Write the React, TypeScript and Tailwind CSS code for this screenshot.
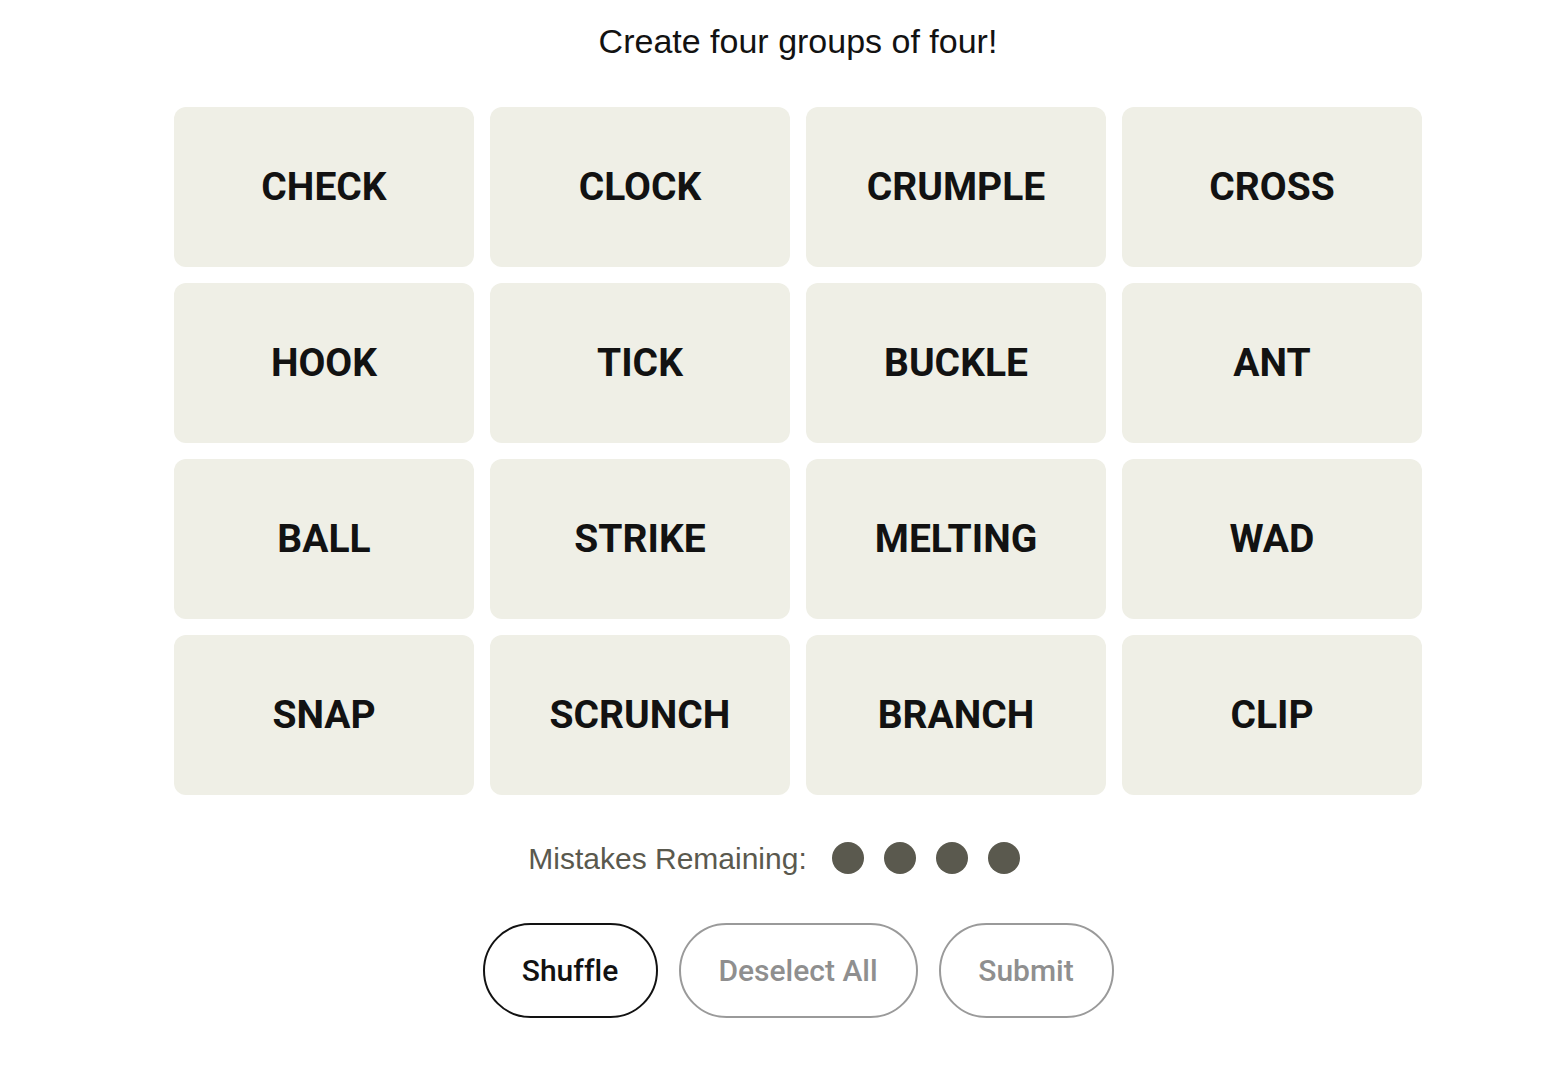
import React from "react";

const words = [
    "CHECK", "CLOCK", "CRUMPLE", "CROSS",
    "HOOK", "TICK", "BUCKLE", "ANT",
    "BALL", "STRIKE", "MELTING", "WAD",
    "SNAP", "SCRUNCH", "BRANCH", "CLIP",
];

const App: React.FC = () => {
    return (
        <div className="min-h-screen bg-white flex flex-col items-center pl-[28px] pt-[21px] text-[#121212]">
            <h1 className="text-[34px] leading-[40px] font-normal font-['Liberation_Sans',Arial,sans-serif]">
                Create four groups of four!
            </h1>

            <div className="mt-[46px] grid grid-cols-[repeat(4,300px)] auto-rows-[160px] gap-4">
                {words.map((w) => (
                    <button
                        key={w}
                        className="bg-[#efefe6] rounded-[12px] flex items-center justify-center font-['Roboto',sans-serif] font-bold text-[39px] text-[#121212]"
                    >
                        {w}
                    </button>
                ))}
            </div>

            <div className="mt-[45px] mr-[48px] flex items-center h-[36px] font-['Liberation_Sans',Arial,sans-serif] text-[30px] text-[#5a594e]">
                <span>Mistakes Remaining:</span>
                <div className="ml-[25px] flex gap-5">
                    <span className="w-8 h-8 rounded-full bg-[#5a594e]" />
                    <span className="w-8 h-8 rounded-full bg-[#5a594e]" />
                    <span className="w-8 h-8 rounded-full bg-[#5a594e]" />
                    <span className="w-8 h-8 rounded-full bg-[#5a594e]" />
                </div>
            </div>

            <div className="mt-[47px] flex gap-[21px] font-['Roboto',sans-serif] font-medium text-[30px] [font-variant-ligatures:none]">
                <button className="w-[175px] h-[95px] rounded-full border-2 border-[#121212] text-[#121212]">
                    Shuffle
                </button>
                <button className="w-[239px] h-[95px] rounded-full border-2 border-[#9a9a9a] text-[#8f8f8f]">
                    Deselect All
                </button>
                <button className="w-[175px] h-[95px] rounded-full border-2 border-[#9a9a9a] text-[#8f8f8f]">
                    Submit
                </button>
            </div>
        </div>
    );
};

export default App;
